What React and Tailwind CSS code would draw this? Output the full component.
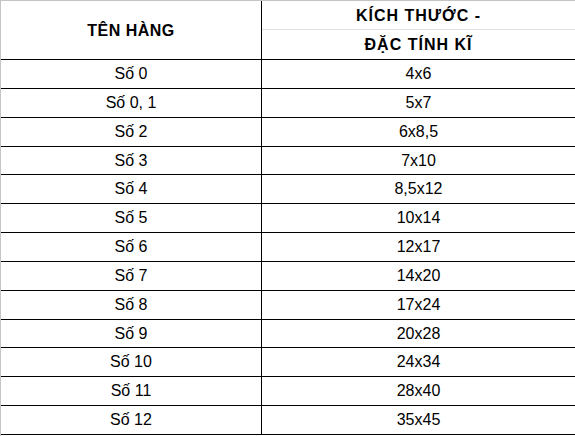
export default function App() {
  const rows = [
    ["Số 0", "4x6", "h-[29px]"],
    ["Số 0, 1", "5x7", "h-[29px]"],
    ["Số 2", "6x8,5", "h-[29px]"],
    ["Số 3", "7x10", "h-[28px]"],
    ["Số 4", "8,5x12", "h-[29px]"],
    ["Số 5", "10x14", "h-[29px]"],
    ["Số 6", "12x17", "h-[29px]"],
    ["Số 7", "14x20", "h-[29px]"],
    ["Số 8", "17x24", "h-[29px]"],
    ["Số 9", "20x28", "h-[28px]"],
    ["Số 10", "24x34", "h-[29px]"],
    ["Số 11", "28x40", "h-[29px]"],
    ["Số 12", "35x45", "h-[29px]"],
  ];
  return (
    <div className="w-[575px] h-[436px] bg-white text-black font-['Liberation_Sans',Arial,sans-serif] border-l border-t border-[#c4c4c4] overflow-hidden">
      <div className="flex h-[59px] border-b border-black">
        <div className="w-[261px] shrink-0 border-r border-black flex items-center justify-center pt-[1px] font-bold text-[16px] tracking-[0.5px]">
          TÊN HÀNG
        </div>
        <div className="flex-1 flex flex-col">
          <div className="h-[29px] border-b border-[#e2e2e2] flex items-center justify-center pt-[1px] font-bold text-[16px] tracking-[1px]">
            KÍCH THƯỚC -
          </div>
          <div className="flex-1 flex items-center justify-center font-bold text-[16px] tracking-[1px]">
            ĐẶC TÍNH KĨ
          </div>
        </div>
      </div>
      {rows.map(([a, b, h]) => (
        <div key={a} className={`flex ${h} border-b border-black text-[16px]`}>
          <div className="w-[261px] shrink-0 border-r border-black flex items-center justify-center">
            {a}
          </div>
          <div className="flex-1 flex items-center justify-center">{b}</div>
        </div>
      ))}
    </div>
  );
}
